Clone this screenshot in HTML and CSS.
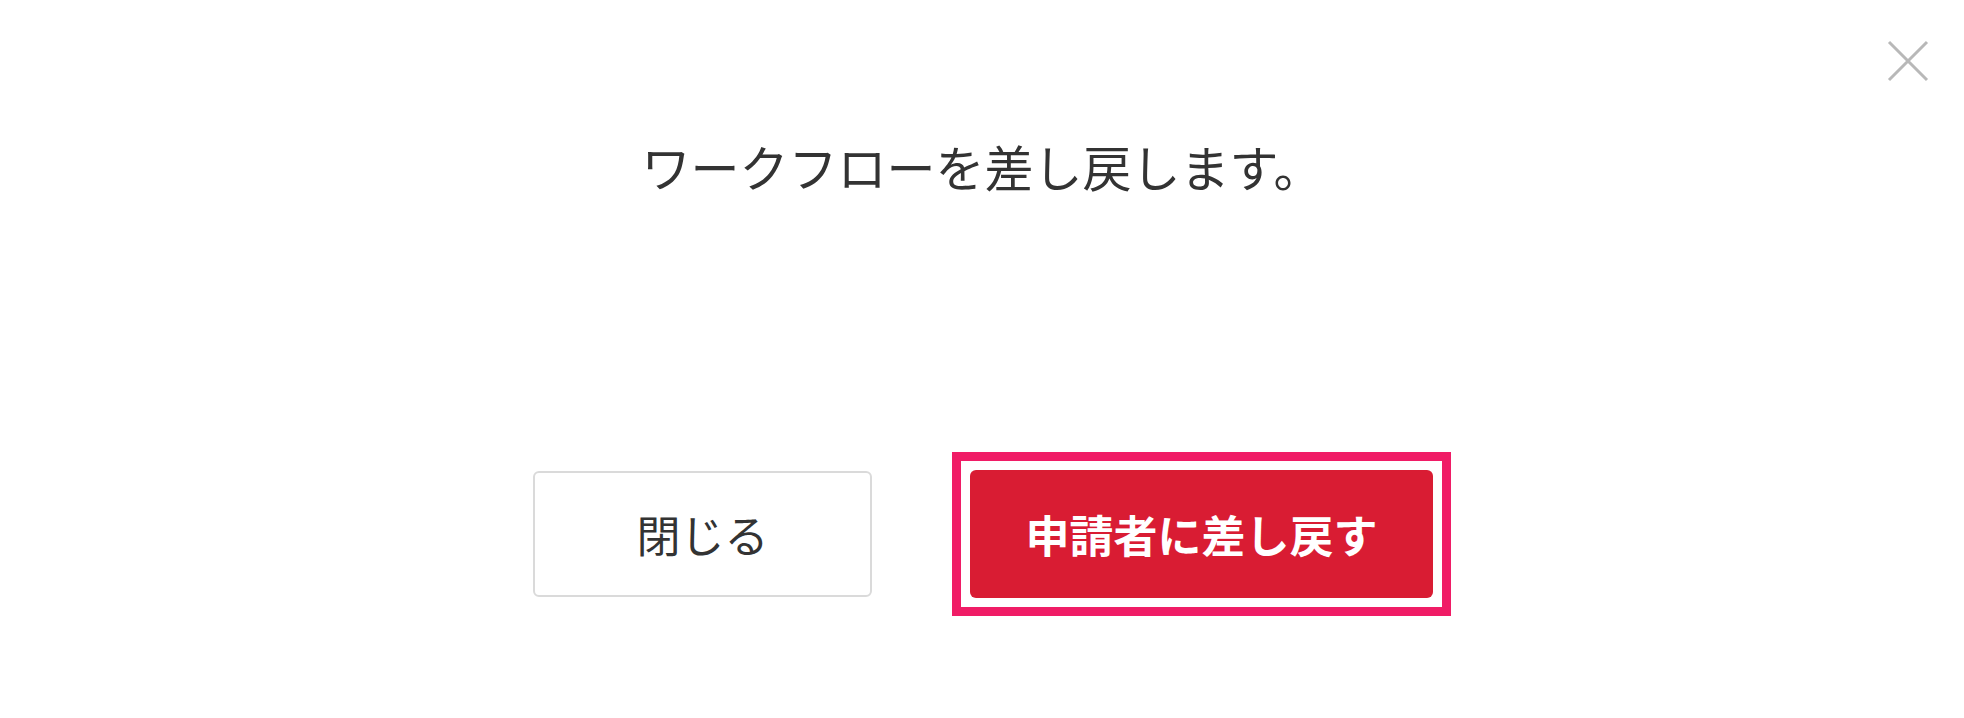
FILE: index.html
```html
<!DOCTYPE html>
<html lang="ja">
<head>
<meta charset="utf-8">
<link rel="stylesheet" href="styles.css">
</head>
<body>
<div class="modal">
  <button class="close-x" aria-label="close">
    <svg width="42" height="42" viewBox="0 0 42 42"><path d="M2 2 L40 40 M40 2 L2 40" stroke="#b8b8b8" stroke-width="3" fill="none"/></svg>
  </button>
  <p class="message">ワークフローを差し戻します。</p>
  <div class="actions">
    <button class="btn btn-close">閉じる</button>
    <div class="focus-ring"><button class="btn btn-danger">申請者に差し戻す</button></div>
  </div>
</div>
</body>
</html>
```
FILE: styles.css
```css
html, body {
  margin: 0;
  padding: 0;
  background: #ffffff;
}
body {
  width: 1964px;
  height: 718px;
  font-family: "Noto Sans CJK JP", "Noto Sans", sans-serif;
  color: #333333;
}
.modal {
  position: relative;
  width: 1964px;
  height: 718px;
  display: flex;
  flex-direction: column;
  align-items: center;
}
.close-x {
  position: absolute;
  top: 40px;
  left: 1887px;
  width: 42px;
  height: 42px;
  padding: 0;
  border: 0;
  background: transparent;
  display: block;
}
.close-x svg { display: block; }
.message {
  margin: 132px 0 0 0;
  font-size: 49px;
  line-height: 68px;
  color: #333333;
  text-align: center;
}
.actions {
  margin-top: 252px;
  margin-left: 20px;
  display: flex;
  align-items: center;
  gap: 80px;
}
.btn {
  font-family: "Noto Sans CJK JP", "Noto Sans", sans-serif;
  font-size: 44px;
  border-radius: 6px;
  cursor: pointer;
}
.btn-close {
  width: 339px;
  height: 126px;
  background: #ffffff;
  border: 2px solid #dadada;
  color: #333333;
}
.focus-ring {
  border: 9px solid #f01c66;
  padding: 9px;
  background: #ffffff;
}
.btn-danger {
  display: block;
  width: 463px;
  height: 128px;
  border: 0;
  background: #d91c33;
  color: #ffffff;
  font-weight: 700;
}
```
